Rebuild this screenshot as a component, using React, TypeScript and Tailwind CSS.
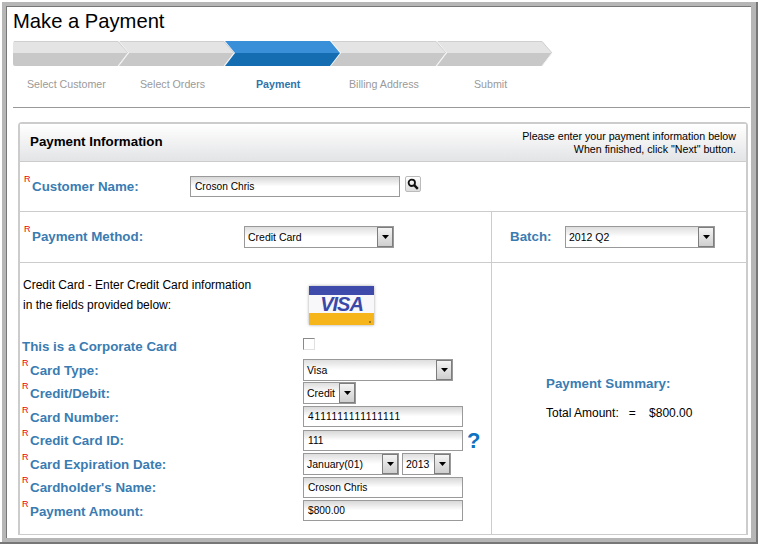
import React from "react";

const Req = () => (
  <span className="absolute left-[-8px] top-[-5px] text-[9px] leading-[10px] font-normal text-[#f00000]">R</span>
);

function Label({ children }: { children: React.ReactNode }) {
  return (
    <span className="relative inline-block text-[13.33px] font-bold leading-[16px] text-[#3a7cb2]">
      <Req />
      {children}
    </span>
  );
}

function Select({ value, width, className = "" }: { value: string; width: number; className?: string }) {
  return (
    <div
      className={`flex h-[22px] shrink-0 border border-[#999] bg-gradient-to-b from-[#dedede] via-white to-white ${className}`}
      style={{ width }}
    >
      <span className="flex-1 truncate pl-[3px] text-[10.5px] leading-[20px] text-black">{value}</span>
      <span className="flex w-[16px] items-center justify-center border-[1.5px] border-[#7d7d7d] bg-gradient-to-b from-[#f4f4f4] to-[#cfcfcf]">
        <svg width="7" height="4" viewBox="0 0 7 4"><path d="M0 0h7L3.5 4z" fill="#000" /></svg>
      </span>
    </div>
  );
}

function TextInput({ value, width, className = "" }: { value: string; width: number; className?: string }) {
  return (
    <input
      readOnly
      value={value}
      style={{ width }}
      className={`h-[21px] shrink-0 border border-[#9a9a9a] bg-gradient-to-b from-[#d8d8d8] via-white to-white pl-[4px] text-[10.2px] leading-[19px] text-black outline-none ${className}`}
    />
  );
}

function Stepper() {
  const starts = [13, 119, 225, 331, 437];
  const w = 105;
  return (
    <svg width="540" height="25" viewBox="13 41 540 25" className="block">
      {starts.map((x, i) => {
        if (i === 2) return null;
        const top =
          i === 0
            ? `M${x} 43Q${x} 41 ${x + 2} 41L${x + w} 41L${x + w + 10} 53L${x} 53Z`
            : `M${x} 41L${x + 10} 53L${x + w + 10} 53L${x + w} 41Z`;
        const bot =
          i === 0
            ? `M${x} 53L${x + w + 10} 53L${x + w} 66L${x + 2} 66Q${x} 66 ${x} 64Z`
            : `M${x + 10} 53L${x} 66L${x + w} 66L${x + w + 10} 53Z`;
        return (
          <g key={x}>
            <path d={top} fill="#e4e4e4" />
            <path d={bot} fill="#c8c8c8" />
            <path d={`M${x + w} 41L${x + w + 10} 53L${x + w} 66`} fill="none" stroke="#f2f2f2" strokeWidth="1" />
            <path d={`M${x + 1} 41.5H${x + w}L${x + w + 10} 53`} fill="none" stroke="#cfcfcf" strokeWidth="1" />
          </g>
        );
      })}
      <path d="M225 41H330L340 53H235Z" fill="#3a8fd9" />
      <path d="M235 53H340L330 66H225Z" fill="#146db1" />
    </svg>
  );
}

export default function App() {
  const steps = [
    { t: "Select Customer", w: 78, ml: 14 },
    { t: "Select Orders", w: 66, ml: 35 },
    { t: "Payment", w: 44, ml: 50, on: true },
    { t: "Billing Address", w: 71, ml: 49 },
    { t: "Submit", w: 33, ml: 54 },
  ];
  const rows = [
    { l: "Card Type:", c: <Select value="Visa" width={150} /> },
    { l: "Credit/Debit:", c: <Select value="Credit" width={53} /> },
    { l: "Card Number:", c: <TextInput value="4111111111111111" width={160} className="tracking-[0.8px]" /> },
    {
      l: "Credit Card ID:",
      c: (
        <>
          <TextInput value="111" width={160} />
          <span className="ml-[4px] mt-[2px] text-[22px] font-bold leading-[20px] text-[#0d72c0]">?</span>
        </>
      ),
    },
    {
      l: "Card Expiration Date:",
      c: (
        <>
          <Select value="January(01)" width={96} />
          <Select value="2013" width={49} className="ml-[3px]" />
        </>
      ),
    },
    { l: "Cardholder's Name:", c: <TextInput value="Croson Chris" width={160} /> },
    { l: "Payment Amount:", c: <TextInput value="$800.00" width={160} /> },
  ];
  return (
    <div
      className="h-[544px] w-[758px] overflow-hidden border-b-2 border-[#777] bg-white"
      style={{ fontFamily: '"Liberation Sans", Arial, sans-serif' }}
    >
      <div className="ml-[2px] mt-[2px] h-[540px] w-[756px] border-r-2 border-[#777]">
        <div className="h-full w-full border-[4px] border-r-[5px] border-[#b6b6b6]">
          <div className="h-full w-full border-l border-t border-[#777] bg-white pl-[6px]">
            <h1 className="mt-[2px] h-[29px] text-[20.2px] leading-[24px] text-black">Make a Payment</h1>
            <div className="mt-[3px]">
              <Stepper />
            </div>
            <div className="mt-[12px] flex h-[13px] text-[10.67px] leading-[13px]">
              {steps.map((s) => (
                <span
                  key={s.t}
                  style={{ marginLeft: s.ml, width: s.w }}
                  className={`shrink-0 whitespace-nowrap ${s.on ? "font-bold text-[#2f74ac]" : "text-[#9a9a9a]"}`}
                >
                  {s.t}
                </span>
              ))}
            </div>
            <div className="mt-[16px] h-px w-[737px] bg-[#999]" />
            <div className="ml-[5px] mt-[14px] h-[413px] w-[730px] rounded-t-[4px] border-b border-l-2 border-r-2 border-t-2 border-[#cccccc]">
              <div className="flex h-[38px] items-center justify-between border-b border-[#cccccc] bg-gradient-to-b from-white to-[#e3e4e6] pl-[10px] pr-[10px]">
                <span className="mb-[2px] text-[13.33px] font-bold text-black">Payment Information</span>
                <span className="text-right text-[10.67px] leading-[13px] text-black">
                  Please enter your payment information below
                  <br />
                  When finished, click "Next" button.
                </span>
              </div>
              <div className="flex h-[50px] items-center border-b border-[#cccccc] pl-[12px]">
                <span className="mb-[2px] w-[158px] shrink-0"><Label>Customer Name:</Label></span>
                <TextInput value="Croson Chris" width={210} />
                <button className="ml-[5px] mt-[-5px] flex h-[16px] w-[16px] items-center justify-center rounded-[2px] border border-[#bbb] bg-gradient-to-b from-white to-[#ddd]">
                  <svg width="12" height="12" viewBox="0 0 12 12">
                    <circle cx="4.8" cy="4.8" r="3.2" fill="none" stroke="#111" strokeWidth="1.8" />
                    <path d="M7.2 7.2L10.8 10.8" stroke="#111" strokeWidth="2.4" />
                  </svg>
                </button>
              </div>
              <div className="flex h-[51px] border-b border-[#cccccc]">
                <div className="flex w-[472px] items-center border-r border-[#cccccc] pl-[12px]">
                  <span className="mb-[2px] w-[212px] shrink-0"><Label>Payment Method:</Label></span>
                  <Select value="Credit Card" width={150} />
                </div>
                <div className="flex flex-1 items-center pl-[18px]">
                  <span className="w-[55px] shrink-0 text-[13.33px] font-bold text-[#3a7cb2]">Batch:</span>
                  <Select value="2012 Q2" width={150} />
                </div>
              </div>
              <div className="flex h-[271px]">
                <div className="w-[472px] border-r border-[#cccccc] pt-[11px]">
                  <div className="flex h-[61px]">
                    <p className="w-[289px] shrink-0 pl-[3px] pt-[1px] text-[12px] leading-[20px] text-black">
                      Credit Card - Enter Credit Card information
                      <br />
                      in the fields provided below:
                    </p>
                    <div className="mt-[12px] flex h-[39px] w-[65px] flex-col shadow-[0_0_3px_rgba(0,0,0,0.35)]">
                      <div className="h-[9px] bg-[#3f4bab]" />
                      <div className="flex h-[18px] items-center justify-center bg-[#f8f8fb] text-[20px] font-bold italic leading-[18px] tracking-[-1px] text-[#3a49a8]">VISA</div>
                      <div className="flex flex-1 items-end justify-end bg-[#f7b51c] pb-[2px] pr-[3px]">
                        <span className="h-[2px] w-[2px] bg-[#9a7a2a]" />
                      </div>
                    </div>
                  </div>
                  <div className="flex h-[23px] items-center">
                    <span className="w-[283px] shrink-0 pl-[2px] text-[13.33px] font-bold text-[#3a7cb2]">This is a Corporate Card</span>
                    <span className="mt-[-6px] h-[12px] w-[12px] border border-[#8a8a8a] border-b-[#e0e0e0] border-r-[#e0e0e0]" />
                  </div>
                  {rows.map((r) => (
                    <div key={r.l} className="flex h-[23.5px] items-center">
                      <span className="w-[283px] shrink-0 pl-[10px]"><Label>{r.l}</Label></span>
                      {r.c}
                    </div>
                  ))}
                </div>
                <div className="flex-1 pl-[54px] pt-[113px]">
                  <div className="text-[13.33px] font-bold leading-[16px] text-[#3a7cb2]">Payment Summary:</div>
                  <div className="mt-[14px] whitespace-pre text-[12px] leading-[14px] text-black">Total Amount:   =    $800.00</div>
                </div>
              </div>
            </div>
          </div>
        </div>
      </div>
    </div>
  );
}
